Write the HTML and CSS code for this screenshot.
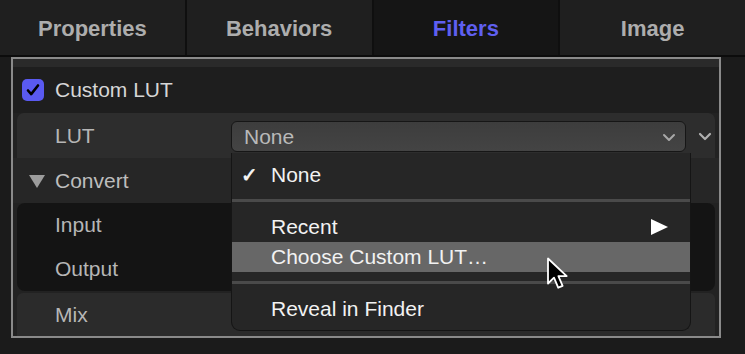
FILE: index.html
```html
<!DOCTYPE html>
<html lang="en">
<head>
    <meta charset="UTF-8">
    <title>Filters - Custom LUT</title>
    <link rel="stylesheet" href="styles.css">
</head>
<body>
    <div class="tabs">
        <div class="tab">Properties</div>
        <div class="tab">Behaviors</div>
        <div class="tab active">Filters</div>
        <div class="tab">Image</div>
    </div>

    <div class="panel">
        <div class="strip"></div>

        <div class="row row-check">
            <span class="checkbox">
                <svg width="22" height="22" viewBox="0 0 22 22"><path d="M6 11.5l3.2 3.6L16 6.5" fill="none" stroke="#000" stroke-width="2.6" stroke-linecap="round" stroke-linejoin="round"/></svg>
            </span>
            <span class="check-label">Custom LUT</span>
        </div>

        <div class="row row-lut">
            <span class="label">LUT</span>
            <div class="popup">
                <span>None</span>
                <svg class="chev" width="14" height="9" viewBox="0 0 14 9"><path d="M2 2l5 5 5-5" fill="none" stroke="#a8a8a8" stroke-width="2" stroke-linecap="round" stroke-linejoin="round"/></svg>
            </div>
            <svg class="chev-out" width="14" height="9" viewBox="0 0 14 9"><path d="M2 2l5 5 5-5" fill="none" stroke="#b0b0b0" stroke-width="2.2" stroke-linecap="round" stroke-linejoin="round"/></svg>
        </div>

        <div class="row row-group">
            <svg class="disclosure" width="16" height="14" viewBox="0 0 16 14"><path d="M0 1h16L8 14z" fill="#9c9c9c"/></svg>
            <span class="group-label">Convert</span>
        </div>

        <div class="io-box">
            <div class="row io-row"><span class="label">Input</span></div>
            <div class="row io-row"><span class="label">Output</span></div>
        </div>

        <div class="row row-mix">
            <span class="label">Mix</span>
        </div>
    </div>

    <div class="menu">
        <div class="item"><span class="tick">✓</span>None</div>
        <div class="sep"></div>
        <div class="item">Recent
            <svg class="arrow" width="17" height="16" viewBox="0 0 17 16"><path d="M0 0l17 8-17 8z" fill="#fff"/></svg>
        </div>
        <div class="item hover">Choose Custom LUT…</div>
        <div class="sep"></div>
        <div class="item">Reveal in Finder</div>
    </div>

    <svg class="cursor" width="24" height="34" viewBox="0 0 24 34">
        <path d="M2 1.5v25l6-5.8 4.2 10 4.4-1.9-4.2-9.7h8.3z" fill="#000" stroke="#fff" stroke-width="1.8" stroke-linejoin="round"/>
    </svg>
</body>
</html>
```

FILE: styles.css
```css
body {
    margin: 0;
    background-color: #1b1b1b;
    font-family: "Liberation Sans", Arial, sans-serif;
    font-size: 21px;
    height: 354px;
    overflow: hidden;
    position: relative;
}

.tabs {
    display: flex;
    height: 55px;
    background-color: #0f0f0f;
    border-bottom: 2px solid #0c0c0c;
    gap: 2px;
}

.tab {
    flex: 1;
    display: flex;
    align-items: center;
    justify-content: center;
    background-color: #1f1f1f;
    color: #adadad;
    font-size: 22px;
    font-weight: bold;
    padding-top: 2px;
}

.tab.active {
    background-color: #151515;
    color: #5f5ff0;
}

.panel {
    width: 706px;
    height: 277px;
    margin-left: 11px;
    border: 2px solid #8a8a8a;
    background-color: #222222;
    display: flex;
    flex-direction: column;
}

.strip {
    height: 8px;
    background-color: #2a2a2a;
}

.row {
    display: flex;
    align-items: center;
}

.row-check {
    height: 46px;
    padding-left: 9px;
    background-color: #1e1e1e;
}

.checkbox {
    width: 22px;
    height: 22px;
    border-radius: 5px;
    background-color: #5a5af0;
    display: flex;
}

.check-label {
    margin-left: 11px;
    color: #d6d6d6;
}

.label {
    color: #b6b6b6;
    padding-left: 38px;
}

.row-lut {
    height: 45px;
    margin: 0 4px;
    background-color: #2d2d2d;
    border-radius: 7px 7px 0 0;
}

.row-lut .label {
    width: 176px;
}

.popup {
    width: 453px;
    height: 29px;
    border: 1px solid #161616;
    border-radius: 6px;
    background: linear-gradient(#3d3d3d, #444444);
    display: flex;
    align-items: center;
    justify-content: space-between;
    padding: 0 9px 0 12px;
    box-sizing: content-box;
    color: #b9b9b9;
    margin-top: 2px;
    width: 432px;
}

.chev {
    margin-top: 1px;
}

.chev-out {
    margin-left: 12px;
    margin-top: 2px;
}

.row-group {
    height: 45px;
    background-color: #262626;
    padding-left: 16px;
}

.disclosure {
    margin-top: 1px;
}

.group-label {
    margin-left: 10px;
    color: #bdbdbd;
}

.io-box {
    margin: 0 4px;
    height: 88px;
    background-color: #141414;
    border-radius: 8px;
    display: flex;
    flex-direction: column;
}

.io-row {
    height: 44px;
}

.row-mix {
    margin: 2px 4px 0;
    flex: 1;
    background-color: #2b2b2b;
    border-radius: 6px 6px 0 0;
}

.menu {
    position: absolute;
    left: 231px;
    top: 153px;
    width: 460px;
    height: 178px;
    background-color: #262626;
    border: 1px solid #151515;
    border-top: none;
    border-radius: 0 0 9px 9px;
    padding-top: 7px;
    box-sizing: border-box;
    color: #f2f2f2;
}

.item {
    height: 30px;
    display: flex;
    align-items: center;
    padding-left: 39px;
    position: relative;
}

.item.hover {
    background-color: #676767;
}

.tick {
    position: absolute;
    left: 9px;
    font-size: 20px;
    font-weight: bold;
}

.arrow {
    position: absolute;
    right: 22px;
    top: 7px;
}

.sep {
    height: 3px;
    margin: 9px 0 10px;
    background-color: #4a4a4a;
}

.cursor {
    position: absolute;
    left: 546px;
    top: 257px;
}
```
